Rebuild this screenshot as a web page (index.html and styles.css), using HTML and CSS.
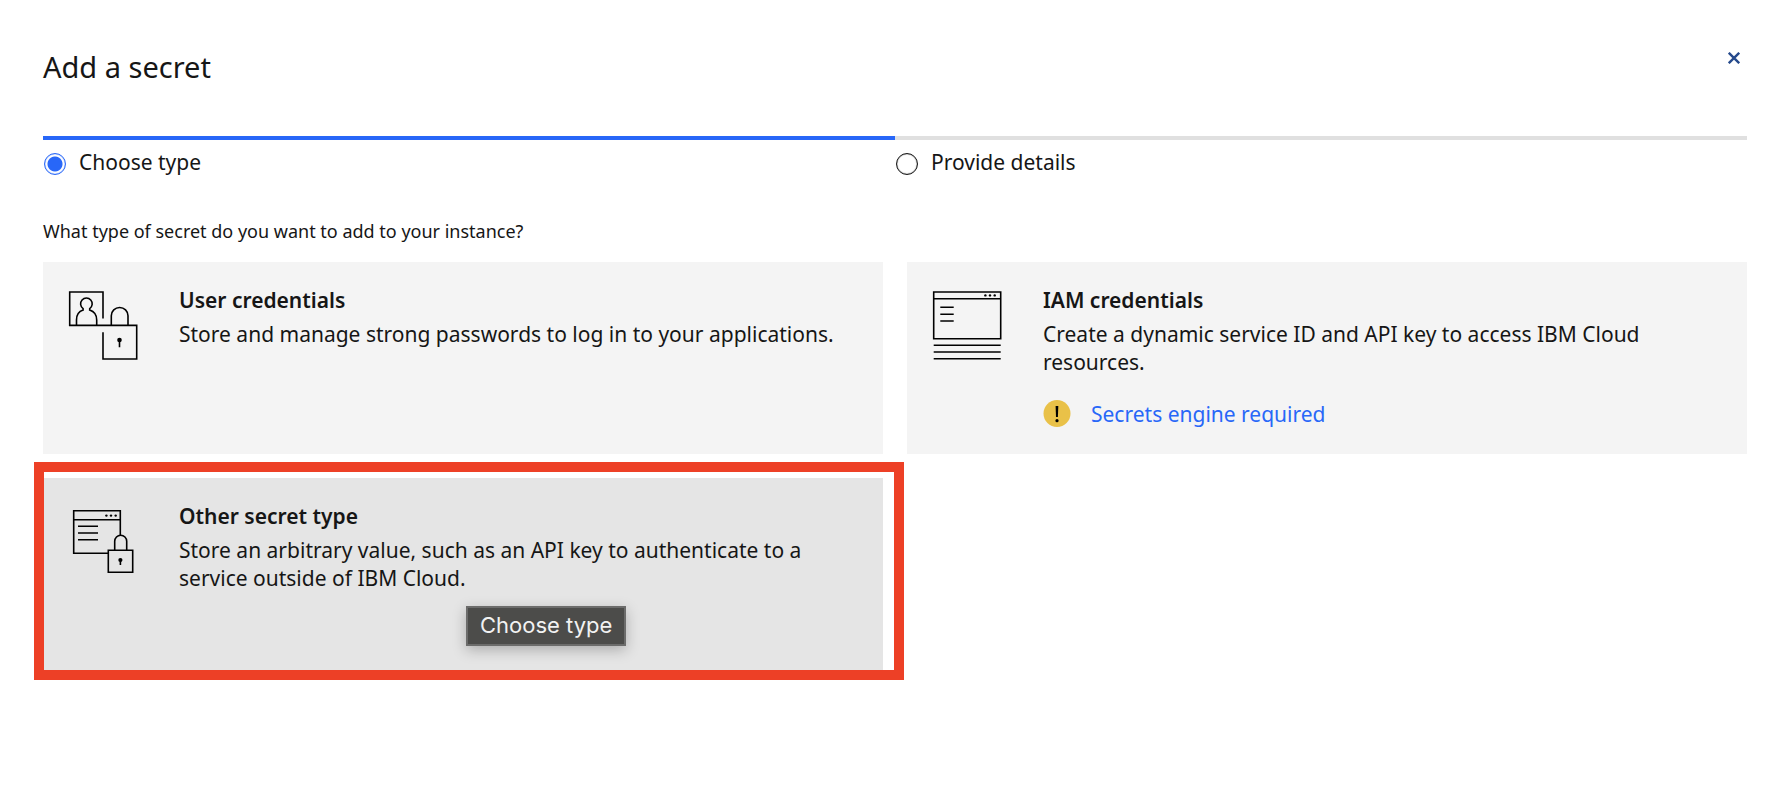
FILE: index.html
```html
<!DOCTYPE html>
<html lang="en">
<head>
<meta charset="utf-8">
<title>Add a secret</title>
<link rel="stylesheet" href="styles.css">
</head>
<body>
<main class="page">
  <header class="header">
    <h1 class="title">Add a secret</h1>
    <button class="close" type="button" aria-label="Close">
      <svg width="12" height="12" viewBox="0 0 12 12" fill="none" stroke="currentColor" stroke-width="2.4"><path d="M.8.8l10.400 10.400M11.200.8.8 11.200"/></svg>
    </button>
  </header>

  <div class="steps">
    <label class="step step-current"><input class="radio" type="radio" name="step" checked><span>Choose type</span></label>
    <label class="step"><input class="radio" type="radio" name="step"><span>Provide details</span></label>
  </div>

  <p class="question">What type of secret do you want to add to your instance?</p>

  <section class="tiles">
    <button class="tile" type="button">
      <svg class="icon" viewBox="0 0 72 72" aria-hidden="true">
        <path d="M36 29.500V3H2.700v33.400h67V70H36V43.300"/>
        <path d="M9.500 36.400V31c0-5.200 2.700-8.600 6.600-9.900v-1.500a5.800 5.800 0 1 1 6.600 0v1.500c3.900 1.300 7 4.700 7 9.900v5.400"/>
        <path d="M44.300 36.400V26.800a8.300 8.300 0 0 1 16.700 0v9.600M52.500 51v7.200"/>
        <circle class="solid" cx="52.500" cy="51" r="2.300"/>
      </svg>
      <span class="body">
        <span class="name">User credentials</span>
        <span class="text">Store and manage strong passwords to log in to your applications.</span>
      </span>
    </button>

    <article class="tile">
      <svg class="icon" viewBox="0 0 72 72" aria-hidden="true">
        <path d="M2.700 3h67v46.700h-67zM2.700 9.700h67M9.300 18.300h13.400M9.300 25.300h13.400M9.300 32h13.400M2.700 56.300h67M2.700 63h67M2.700 69.700h67"/>
        <g class="solid"><circle cx="54.400" cy="6.400" r="1.200"/><circle cx="59" cy="6.400" r="1.200"/><circle cx="63.700" cy="6.400" r="1.200"/></g>
      </svg>
      <div class="body">
        <h2 class="name">IAM credentials</h2>
        <p class="text">Create a dynamic service ID and API key to access IBM Cloud resources.</p>
        <div class="notice">
          <svg width="28" height="28" viewBox="0 0 28 28" aria-hidden="true"><circle cx="14" cy="13.500" r="13.500" fill="#e9c148"/><path d="M12.600 5.900h2.700l-.4 11.200h-1.900z"/><circle cx="14" cy="20.700" r="1.600"/></svg>
          <a class="link" href="#">Secrets engine required</a>
        </div>
      </div>
    </article>

    <div class="highlighted">
      <button class="tile tile-hover" type="button" aria-describedby="tip">
        <svg class="icon" viewBox="0 0 72 72" aria-hidden="true">
          <path d="M41.300 48.300H6.700V5.700h46.600v24.600M6.700 14.700h46.600M11 21.300h20M11 28h20M11 34.700h20"/>
          <path d="M41.300 45.300h24.400v22H41.300zM47.700 45.300v-9a6 6 0 0 1 12 0v9M53.400 55v5"/>
          <g class="solid"><circle cx="39.400" cy="10.600" r="1.200"/><circle cx="44" cy="10.600" r="1.200"/><circle cx="48.700" cy="10.600" r="1.200"/><circle cx="53.400" cy="55" r="2.100"/></g>
        </svg>
        <span class="body">
          <span class="name">Other secret type</span>
          <span class="text">Store an arbitrary value, such as an API key to authenticate to a service outside of IBM Cloud.</span>
        </span>
      </button>
      <span class="tooltip" id="tip" role="tooltip">Choose type</span>
    </div>
  </section>
</main>
</body>
</html>
```
FILE: styles.css
```css
* { box-sizing: border-box; }
body {
  margin: 0;
  background: #fff;
  color: #161616;
  font: 21px/28px "Noto Sans", sans-serif;
}
h1, h2, p { margin: 0; font: inherit; }
button { font: inherit; color: inherit; border: 0; text-align: left; cursor: pointer; }
.page { padding: 44px 44px 44px 43px; }
.header { display: flex; justify-content: space-between; align-items: flex-start; height: 92px; }
.title { font-size: 29px; line-height: 46px; }
.close { display: grid; place-items: center; width: 26px; height: 28px; padding: 0; background: none; color: #264a8c; }
.steps { display: grid; grid-template-columns: 1fr 1fr; }
.step { display: flex; align-items: center; gap: 13px; padding: 8px 0 0 1px; border-top: 4px solid #e0e0e0; }
.step-current { border-color: #2867f8; }
.radio {
  appearance: none;
  width: 22px;
  height: 22px;
  margin: 4px 0 0;
  border: 1px solid #161616;
  box-shadow: inset 0 0 1px #161616;
  border-radius: 50%;
}
.radio:checked {
  border-color: #2867f8;
  box-shadow: inset 0 0 1px #2867f8;
  background: radial-gradient(circle, #2867f8 7px, #fff 8px);
}
.question { margin-top: 41px; font-size: 18px; }
.tiles { display: grid; grid-template-columns: 1fr 1fr; gap: 24px; margin-top: 17px; }
.tile {
  display: flex;
  align-items: flex-start;
  gap: 40px;
  width: 100%;
  min-height: 192px;
  padding: 24px;
  background: #f4f4f4;
}
.tile-hover { background: #e5e5e5; }
.icon { flex: none; width: 72px; height: 72px; margin-top: 3px; fill: none; stroke: #000; stroke-width: 1.6; }
.solid { fill: #000; stroke: none; }
.body { display: block; }
.name { display: block; font-weight: 600; margin-bottom: 6px; }
.text { display: block; }
.notice { display: flex; gap: 20px; margin-top: 24px; }
.link { color: #2867f8; text-decoration: none; }
.highlighted { position: relative; }
.highlighted::after {
  content: "";
  position: absolute;
  inset: -16px -21px -10px -9px;
  border: 10px solid #ed4026;
  pointer-events: none;
}
.tooltip {
  position: absolute;
  left: 423px;
  top: 128px;
  padding: 3px 12px 5px;
  border: 2px solid #6c6c6b;
  background: #4c4c4a;
  color: #f2f2f2;
  font-family: Inter, sans-serif;
  font-size: 22px;
  box-shadow: 0 4px 14px rgba(0, 0, 0, .25);
  white-space: nowrap;
}
```
